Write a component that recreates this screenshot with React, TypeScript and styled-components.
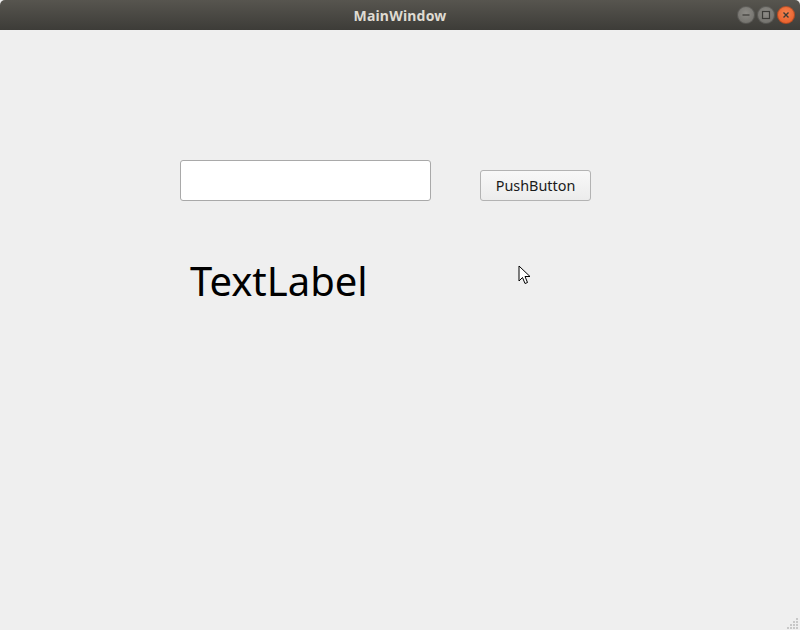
import React from "react";
import styled, { createGlobalStyle } from "styled-components";

const Global = createGlobalStyle`
  html, body { margin: 0; padding: 0; background: #efefef; }
  body { font-family: "Noto Sans", "Open Sans", sans-serif; }
`;

const Window = styled.div`
  width: 800px;
  height: 630px;
  display: flex;
  flex-direction: column;
  background: #efefef;
  position: relative;
  overflow: hidden;
`;

const TitleBar = styled.div`
  height: 30px;
  flex: 0 0 30px;
  background: linear-gradient(#57554f, #3d3c38);
  border-radius: 5px 5px 0 0;
  display: flex;
  align-items: center;
  justify-content: center;
  position: relative;
`;

const Title = styled.div`
  color: #dfdbd2;
  font-weight: bold;
  font-size: 14px;
  letter-spacing: 0.2px;
`;

const Controls = styled.div`
  position: absolute;
  right: 5px;
  top: 6px;
  display: flex;
  gap: 2px;
`;

const Ctrl = styled.div<{ $close?: boolean }>`
  width: 18px;
  height: 18px;
  border-radius: 50%;
  background: ${(p) =>
    p.$close
      ? "radial-gradient(circle at 50% 40%, #f5834f, #e5531f)"
      : "radial-gradient(circle at 50% 40%, #8d8b86, #6a6964)"};
  display: flex;
  align-items: center;
  justify-content: center;
  box-shadow: inset 0 0 0 1px rgba(0,0,0,0.25);
`;

const Content = styled.div`
  flex: 1;
  padding: 130px 0 0 180px;
  display: flex;
  flex-direction: column;
`;

const Row = styled.div`
  display: flex;
  align-items: flex-start;
`;

const LineEdit = styled.input`
  box-sizing: border-box;
  width: 251px;
  height: 41px;
  border: 1px solid #a9a9a9;
  border-radius: 3px;
  background: #fff;
  outline: none;
  padding: 0 6px;
  font: inherit;
`;

const PushButton = styled.button`
  box-sizing: border-box;
  margin: 10px 0 0 49px;
  width: 111px;
  height: 31px;
  border: 1px solid #b3b3b3;
  border-radius: 3px;
  background: linear-gradient(#f8f8f8, #ececec);
  color: #1a1a1a;
  font-family: "Noto Sans", sans-serif;
  font-size: 14.4px;
  padding: 0;
  display: flex;
  align-items: center;
  justify-content: center;
`;

const TextLabel = styled.div`
  margin: 55px 0 0 10px;
  font-size: 40px;
  line-height: 50px;
  color: #000;
  font-family: "Noto Sans", sans-serif;
`;

const Cursor = styled.svg`
  position: absolute;
  left: 518px;
  top: 265px;
`;

const Grip = styled.svg`
  position: absolute;
  right: 1px;
  bottom: 1px;
`;

export default function App() {
  return (
    <>
      <Global />
      <Window>
        <TitleBar>
          <Title>MainWindow</Title>
          <Controls>
            <Ctrl>
              <svg width="10" height="10" viewBox="0 0 10 10">
                <line x1="1.5" y1="5" x2="8.5" y2="5" stroke="#3c3b37" strokeWidth="1.2" />
              </svg>
            </Ctrl>
            <Ctrl>
              <svg width="10" height="10" viewBox="0 0 10 10">
                <rect x="1.5" y="1.5" width="7" height="7" fill="none" stroke="#3c3b37" strokeWidth="1.2" />
              </svg>
            </Ctrl>
            <Ctrl $close>
              <svg width="10" height="10" viewBox="0 0 10 10">
                <path d="M2.5 2.5L7.5 7.5M7.5 2.5L2.5 7.5" stroke="#3c3b37" strokeWidth="1.4" />
              </svg>
            </Ctrl>
          </Controls>
        </TitleBar>
        <Content>
          <Row>
            <LineEdit />
            <PushButton>PushButton</PushButton>
          </Row>
          <TextLabel>TextLabel</TextLabel>
        </Content>
        <Cursor width="14" height="22" viewBox="0 0 14 22">
          <path d="M1 1 L1 16 L4.5 12.5 L7 18.5 L9.5 17.5 L7 11.5 L12 11.5 Z" fill="#fff" stroke="#000" strokeWidth="1" strokeLinejoin="round" />
        </Cursor>
        <Grip width="12" height="12" viewBox="0 0 12 12">
          {[[9, 1], [6, 4], [9, 4], [3, 7], [6, 7], [9, 7], [0, 10], [3, 10], [6, 10], [9, 10]].map(([x, y], i) => (
            <rect key={i} x={x} y={y} width="2" height="2" fill="#c8c8c8" />
          ))}
        </Grip>
      </Window>
    </>
  );
}
